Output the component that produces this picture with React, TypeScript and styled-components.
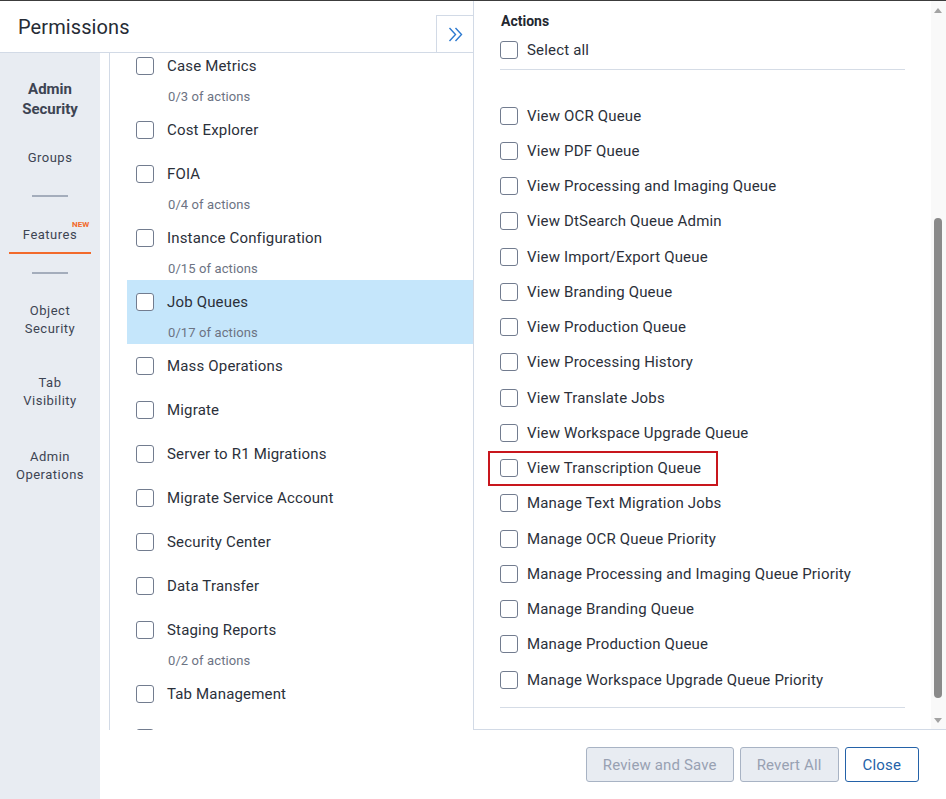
import React from 'react';
import styled, { createGlobalStyle } from 'styled-components';

const GlobalStyle = createGlobalStyle`
  html, body {
    margin: 0;
    padding: 0;
    background: #ffffff;
  }
  body {
    font-family: Roboto, "Liberation Sans", Arial, sans-serif;
    color: #2b303a;
  }
  * {
    box-sizing: border-box;
  }
`;

const Shell = styled.div`
  width: 946px;
  height: 799px;
  border-top: 1px solid #3c3c3c;
  display: grid;
  grid-template-columns: 100px 373px 473px;
  grid-template-rows: 52px 677px 69px;
  overflow: hidden;
`;

const Header = styled.header`
  grid-column: 1 / 3;
  grid-row: 1;
  display: flex;
  align-items: center;
  justify-content: space-between;
  padding-left: 18px;
  border-bottom: 1px solid #d2dae6;
`;

const Title = styled.h1`
  margin: 0;
  font-size: 20px;
  font-weight: 400;
  line-height: 24px;
  letter-spacing: 0.1px;
  color: #262b35;
`;

const ExpandButton = styled.button`
  align-self: flex-end;
  width: 37px;
  height: 37px;
  padding: 0;
  display: flex;
  align-items: center;
  justify-content: center;
  background: #ffffff;
  border: 1px solid #d2dae6;
  border-right: none;
  border-bottom: none;
  cursor: pointer;
`;

const Sidebar = styled.nav`
  grid-column: 1;
  grid-row: 2 / 4;
  background: #e8ecf2;
  display: flex;
  flex-direction: column;
  align-items: center;
`;

const SectionTitle = styled.div`
  margin-top: 26px;
  font-size: 15px;
  font-weight: 700;
  line-height: 20px;
  color: #3d4453;
  text-align: center;
`;

const NavItem = styled.div<{ $top: number; $active?: boolean }>`
  position: relative;
  margin-top: ${p => p.$top}px;
  font-size: 13px;
  line-height: 18px;
  letter-spacing: 0.5px;
  color: #3d4453;
  text-align: center;
  ${p =>
    p.$active &&
    `
    width: 82px;
    padding-bottom: 8px;
    border-bottom: 2px solid #f26a2b;
  `}
`;

const NavLabel = styled.span`
  position: relative;
`;

const NewBadge = styled.span`
  position: absolute;
  top: -6px;
  right: -12px;
  font-size: 8px;
  font-weight: 700;
  line-height: 8px;
  letter-spacing: 0;
  color: #f26a2b;
`;

const NavDivider = styled.div<{ $top: number }>`
  margin-top: ${p => p.$top}px;
  width: 36px;
  height: 2px;
  background: #a4adbc;
`;

const FeaturePane = styled.section`
  grid-column: 2;
  grid-row: 2;
  padding-left: 9px;
  overflow: hidden;
`;

const FeatureList = styled.ul`
  margin: 0;
  height: 677px;
  padding: 0 0 0 17px;
  list-style: none;
  border-left: 1px solid #d2dae6;
  overflow: hidden;
`;

const FeatureScroll = styled.div`
  margin-top: -9px;
`;

const FeatureItem = styled.li<{ $selected?: boolean }>`
  padding-left: 9px;
  background: ${p => (p.$selected ? '#c5e6fb' : 'transparent')};
`;

const FeatureRow = styled.label`
  display: flex;
  align-items: center;
  gap: 13px;
  height: 44px;
  font-size: 15px;
  letter-spacing: 0.17px;
  color: #2b303a;
`;

const FeatureCount = styled.div`
  padding: 1px 0 3px 32px;
  font-size: 13px;
  line-height: 16px;
  letter-spacing: 0.1px;
  color: #6c7383;
`;

const Box = styled.span`
  flex: none;
  width: 18px;
  height: 18px;
  border: 1.5px solid #727c8f;
  border-radius: 3px;
  background: #ffffff;
`;

const ActionsPane = styled.section`
  grid-column: 3;
  grid-row: 1 / 3;
  position: relative;
  border-left: 1px solid #d2dae6;
  border-bottom: 1px solid #d2dae6;
  padding: 11px 41px 0 26px;
  overflow: hidden;
`;

const ActionsTitle = styled.h2`
  margin: 0 0 0 1px;
  font-size: 14px;
  font-weight: 700;
  line-height: 18px;
  color: #23272f;
`;

const SelectAll = styled.div`
  margin-top: 6px;
  padding-bottom: 5px;
  border-bottom: 1px solid #d5dce6;
`;

const ActionList = styled.ul`
  margin: 28px 0 0;
  padding: 0;
  list-style: none;
`;

const ActionRow = styled.li<{ $flagged?: boolean }>`
  display: flex;
  align-items: center;
  gap: 9px;
  height: 35.25px;
  font-size: 15px;
  letter-spacing: 0.17px;
  color: #2b303a;
  ${p =>
    p.$flagged &&
    `
    width: fit-content;
    margin-left: -12px;
    padding: 0 17px 0 12px;
    outline: 2.5px solid #c8161d;
    outline-offset: -2px;
  `}
`;

const SelectRow = styled(ActionRow)`
  height: 28px;
`;

const ActionsFooterRule = styled.div`
  margin-top: 10px;
  border-top: 1px solid #d5dce6;
`;

const ScrollTrack = styled.div`
  position: absolute;
  top: 0;
  right: 0;
  bottom: 0;
  width: 15px;
  background: #f9f9f9;
`;

const ScrollArrow = styled.span<{ $down?: boolean }>`
  position: absolute;
  left: 3px;
  ${p => (p.$down ? 'bottom: 6px;' : 'top: 7px;')}
  width: 0;
  height: 0;
  border-left: 4.5px solid transparent;
  border-right: 4.5px solid transparent;
  ${p =>
    p.$down
      ? 'border-top: 5px solid #a3a3a3;'
      : 'border-bottom: 5px solid #a3a3a3;'}
`;

const ScrollThumb = styled.span`
  position: absolute;
  left: 3px;
  top: 217px;
  width: 8px;
  height: 480px;
  border-radius: 4px;
  background: #8a8a8a;
`;

const Footer = styled.footer`
  grid-column: 2 / 4;
  grid-row: 3;
  display: flex;
  align-items: center;
  justify-content: flex-end;
  gap: 6px;
  padding-right: 27px;
`;

const FooterButton = styled.button<{ $primary?: boolean }>`
  height: 35px;
  padding: 0 ${p => (p.$primary ? '17px' : '16px')};
  font-family: inherit;
  font-size: 15px;
  letter-spacing: 0.15px;
  border-radius: 3px;
  border: 1px solid ${p => (p.$primary ? '#2462a8' : '#a8b3c4')};
  background: ${p => (p.$primary ? '#ffffff' : '#e8ecf2')};
  color: ${p => (p.$primary ? '#2462a8' : '#98a1b2')};
  cursor: ${p => (p.$primary ? 'pointer' : 'default')};
`;

const ChevronsIcon = () => (
  <svg width="15" height="15" viewBox="0 0 15 15" fill="none">
    <path d="M1.5 1 L7.5 7.5 L1.5 14" stroke="#2d7ad0" strokeWidth="1.4" />
    <path d="M7.5 1 L13.5 7.5 L7.5 14" stroke="#2d7ad0" strokeWidth="1.4" />
  </svg>
);

interface Feature {
  name: string;
  count?: string;
  selected?: boolean;
}

const features: Feature[] = [
  { name: 'Case Metrics', count: '0/3 of actions' },
  { name: 'Cost Explorer' },
  { name: 'FOIA', count: '0/4 of actions' },
  { name: 'Instance Configuration', count: '0/15 of actions' },
  { name: 'Job Queues', count: '0/17 of actions', selected: true },
  { name: 'Mass Operations' },
  { name: 'Migrate' },
  { name: 'Server to R1 Migrations' },
  { name: 'Migrate Service Account' },
  { name: 'Security Center' },
  { name: 'Data Transfer' },
  { name: 'Staging Reports', count: '0/2 of actions' },
  { name: 'Tab Management' },
];

const actions = [
  'View OCR Queue',
  'View PDF Queue',
  'View Processing and Imaging Queue',
  'View DtSearch Queue Admin',
  'View Import/Export Queue',
  'View Branding Queue',
  'View Production Queue',
  'View Processing History',
  'View Translate Jobs',
  'View Workspace Upgrade Queue',
  'View Transcription Queue',
  'Manage Text Migration Jobs',
  'Manage OCR Queue Priority',
  'Manage Processing and Imaging Queue Priority',
  'Manage Branding Queue',
  'Manage Production Queue',
  'Manage Workspace Upgrade Queue Priority',
];

export default function App() {
  return (
    <>
      <GlobalStyle />
      <Shell>
        <Header>
          <Title>Permissions</Title>
          <ExpandButton aria-label="Expand">
            <ChevronsIcon />
          </ExpandButton>
        </Header>

        <Sidebar>
          <SectionTitle>
            Admin
            <br />
            Security
          </SectionTitle>
          <NavItem $top={30}>Groups</NavItem>
          <NavDivider $top={28} />
          <NavItem $top={29} $active>
            <NavLabel>
              Features
              <NewBadge>NEW</NewBadge>
            </NavLabel>
          </NavItem>
          <NavDivider $top={18} />
          <NavItem $top={28}>
            Object
            <br />
            Security
          </NavItem>
          <NavItem $top={36}>
            Tab
            <br />
            Visibility
          </NavItem>
          <NavItem $top={38}>
            Admin
            <br />
            Operations
          </NavItem>
        </Sidebar>

        <FeaturePane>
          <FeatureList>
            <FeatureScroll>
              {features.map(f => (
                <FeatureItem key={f.name} $selected={f.selected}>
                  <FeatureRow>
                    <Box />
                    {f.name}
                  </FeatureRow>
                  {f.count && <FeatureCount>{f.count}</FeatureCount>}
                </FeatureItem>
              ))}
              {/* next row, scrolled just past the bottom edge */}
              <FeatureItem>
                <FeatureRow>
                  <Box />
                </FeatureRow>
              </FeatureItem>
            </FeatureScroll>
          </FeatureList>
        </FeaturePane>

        <ActionsPane>
          <ActionsTitle>Actions</ActionsTitle>
          <SelectAll>
            <SelectRow as="div">
              <Box />
              Select all
            </SelectRow>
          </SelectAll>
          <ActionList>
            {actions.map(a => (
              <ActionRow key={a} $flagged={a === 'View Transcription Queue'}>
                <Box />
                {a}
              </ActionRow>
            ))}
          </ActionList>
          <ActionsFooterRule />
          <ScrollTrack>
            <ScrollArrow />
            <ScrollThumb />
            <ScrollArrow $down />
          </ScrollTrack>
        </ActionsPane>

        <Footer>
          <FooterButton disabled>Review and Save</FooterButton>
          <FooterButton disabled>Revert All</FooterButton>
          <FooterButton $primary>Close</FooterButton>
        </Footer>
      </Shell>
    </>
  );
}
